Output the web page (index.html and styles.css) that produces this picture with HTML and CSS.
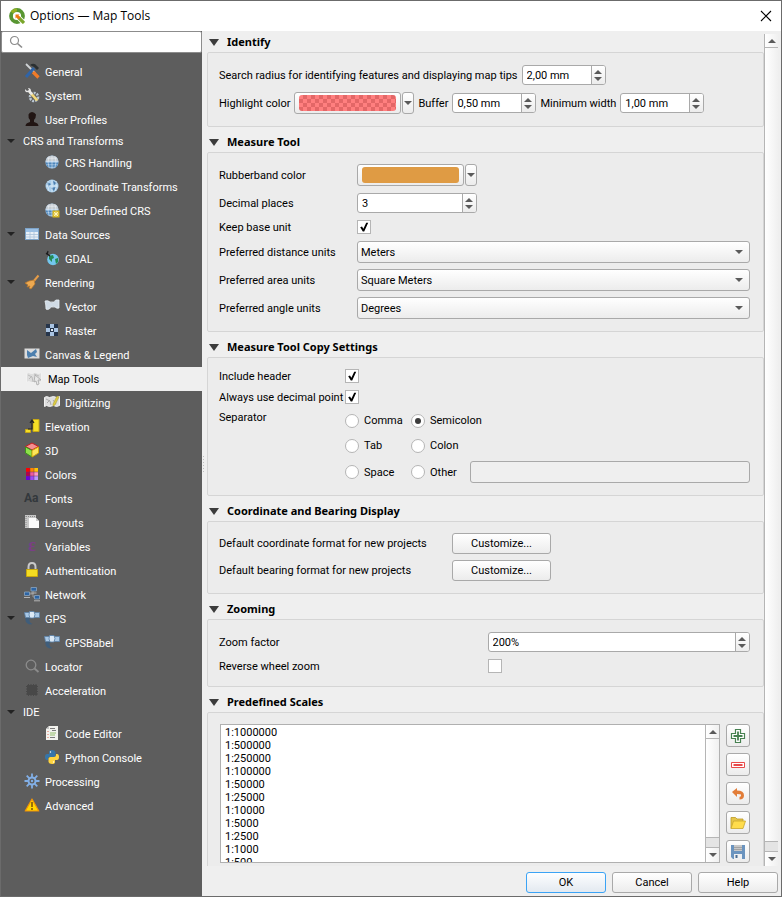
FILE: index.html
```
<!DOCTYPE html>
<html lang="en">
  <head>
    <meta charset="utf-8" />
    <meta content="width=device-width, initial-scale=1" name="viewport" />
    <title>Options — Map Tools</title>
    <link rel="stylesheet" href="styles.css">
  </head>
  <body>
    <svg class="defs" aria-hidden="true">
      <symbol id="globe" viewBox="0 0 16 16">
        <circle cx="8" cy="8" r="6.600" fill="#8fb8dd"/>
        <path d="M1.600 7a6.500 6.500 0 0 1 12.800 0z" fill="#c4ccd2"/>
        <path d="M2 9.500h12M3 12h10" stroke="#4f86bb" stroke-width="1.400"/>
        <path d="M8 1.500v13M1.500 7.500h13M3 4.200h10M5 2.500q-2 5.500 0 11M11 2.500q2 5.500 0 11" fill="none" stroke="#f4f7fa" stroke-width=".5"/>
      </symbol>
      <symbol id="satellite" viewBox="0 0 16 16">
        <path d="M.5 2.500h5v5h-4zM10.500 2.500h5v5h-5z" fill="#a9c8e6" stroke="#5d83a8" stroke-width=".8"/>
        <path d="M5.500 1.500h4.500l1 3-1 3.500H6L5 5z" fill="#dce9f5" stroke="#587fa6" stroke-width=".8"/>
        <path d="M1.500 8q-.5 4 2 5.500t5 .5q-2.500-1-3-3T6.500 8z" fill="#3f5d7a"/>
      </symbol>
      <symbol id="map" viewBox="0 0 16 16">
        <path d="M.5 3.500l2-1 3 1 4-1 3 1 3-1v9l-3 1-3-1-4 1-3-1-2 1z" fill="#dedede" stroke="#f2f2f2"/>
      </symbol>
    </svg>

    <div class="window">
      <header class="titlebar">
        <svg class="logo" viewBox="0 0 16 16">
          <circle cx="8" cy="8" r="6" fill="none" stroke="#589632" stroke-width="3.800"/>
          <path d="M3 4.500A6 6 0 0 1 8 2" fill="none" stroke="#93b023" stroke-width="3.200"/>
          <path d="M8.500 8.500L15 15" stroke="#fff" stroke-width="5"/>
          <path d="M9.500 9.500l5.500 5.500" stroke="#7aa62b" stroke-width="3.200"/>
          <path d="M6.500 6.500h4l-1 1 2 2-2 2-2-2-1 1z" fill="#ee7913"/>
        </svg>
        <h1>Options — Map Tools</h1>
        <button class="close" type="button" aria-label="Close">
          <svg viewBox="0 0 12 12"><path d="M1 1l10 10M11 1L1 11" stroke="#000" stroke-width="1.100"/></svg>
        </button>
      </header>

      <div class="main">
        <aside class="sidebar">
          <label class="search">
            <svg viewBox="0 0 14 14"><circle cx="5.500" cy="5.500" r="4" fill="none" stroke="#8c8c8c" stroke-width="1.200"/><path d="M8.500 8.500l4.500 4" stroke="#8c8c8c" stroke-width="1.600"/></svg>
            <input type="text" aria-label="Search">
          </label>
          <nav class="tree">
            <a href="#"><svg viewBox="0 0 16 16"><path d="M2 1l9 9" stroke="#cfd3d6" stroke-width="1.800"/><path d="M9 9l5.500 5.500" stroke="#f07b28" stroke-width="3.200"/><path d="M10 5L2 14" stroke="#2f64a8" stroke-width="3"/><path d="M6 2q4-3 7 1l2 2-2 2-3-3z" fill="#2b2f31"/></svg>General</a>
            <a href="#"><svg viewBox="0 0 16 16"><circle cx="10" cy="10" r="4" fill="none" stroke="#b9c6d2" stroke-width="2.600" stroke-dasharray="2 1"/><path d="M5 6l7 8 2.500-1-7-8z" fill="#f3d978"/><path d="M1 2l2 2 2-1-1-2q3 0 3 3l2 3-2 1-3-3Q1 6 1 2" fill="#e8e8e8"/></svg>System</a>
            <a href="#"><svg viewBox="0 0 16 16"><path d="M1.500 15q0-3 4.500-4V9Q4 7 4.500 3.500 5.500 1 8 1t4 2.500Q12 7 10 9v2q4.500 1 4.500 4z" fill="#211513"/></svg>User Profiles</a>
            <a href="#" class="group open">CRS and Transforms</a>
            <a href="#" class="child"><svg><use href="#globe"/></svg>CRS Handling</a>
            <a href="#" class="child"><svg viewBox="0 0 16 16"><circle cx="8" cy="8" r="6.500" fill="#a9cdea"/><path d="M3 4l4 2-3 3zM9 3l4 2-3 2zM7 10l5-1-2 4z" fill="#4b7fb1"/><path d="M2 8h12M8 2v12M4 3q-1 5 1 10M12 3q1 5-1 10" fill="none" stroke="#e4f0f8" stroke-width=".7"/></svg>Coordinate Transforms</a>
            <a href="#" class="child"><svg viewBox="0 0 16 16"><use href="#globe"/><rect x="8.500" y="8.500" width="7" height="7" fill="#d5b51e"/><path d="M12 9.500v5M9.500 12h5M10 10l4 4M14 10l-4 4" stroke="#fff7c0" stroke-width=".9"/></svg>User Defined CRS</a>
            <a href="#" class="open"><svg viewBox="0 0 16 16"><rect x="1.500" y="2.500" width="13" height="11" fill="#e8eff6" stroke="#7da3c8"/><path d="M2 4.500h12" stroke="#9cc0e4" stroke-width="3"/><path d="M2 8.500h12M2 11h12M6 6v7M10 6v7" stroke="#a9c2da" stroke-width=".8"/></svg>Data Sources</a>
            <a href="#" class="child"><svg viewBox="0 0 16 16"><circle cx="9" cy="9.500" r="5.800" fill="#73c7ee"/><path d="M5 6l4-1 1 3-2 1v3L5 9zM11 9l3-1v4l-2 2z" fill="#258a53"/><path d="M2 3l4 3M4 1L3 5" stroke="#1c1c1c" stroke-width="1.200"/></svg>GDAL</a>
            <a href="#" class="open"><svg viewBox="0 0 16 16"><path d="M9 8l5.500-6.500" stroke="#e59c48" stroke-width="2"/><path d="M1 9l4-2 5-1 1 4-4 5-2-1 1-2-3 1 1-2z" fill="#eda951" stroke="#b87528" stroke-width=".7"/></svg>Rendering</a>
            <a href="#" class="child"><svg viewBox="0 0 16 16"><path d="M1 3q3-1 5 1 4 1 6-2h3v8q-2 1-4-1-4-1-6 2-2 1-3 0Q2 7 1 3" fill="#d0dbe5" stroke="#e9f0f5" stroke-width=".8"/></svg>Vector</a>
            <a href="#" class="child"><svg viewBox="0 0 16 16"><path d="M2 2h12v12H2z" fill="#26354b"/><path d="M6 2h4v4H6zM2 6h4v4H2zM10 6h4v4h-4zM6 10h4v4H6z" fill="#a9c4e3"/><path d="M7 7h2v2H7z" fill="#e6eef7"/></svg>Raster</a>
            <a href="#"><svg viewBox="0 0 16 16"><path d="M.5 2.500h15v10H.5z" fill="#dcdcdc"/><path d="M3 4l4 3 5-4 1 3-2 2 2 3-4-1-5 2-1-3z" fill="#4c7fae"/></svg>Canvas &amp; Legend</a>
            <a href="#" class="selected"><svg viewBox="0 0 16 16"><use href="#map"/><path d="M2 5l4 2 1 5M8 4l5 2M3 9l3-3" fill="none" stroke="#bcbcbc"/><path d="M9 5l6 5-3 0 1 4-2 1-1-4-2 1z" fill="#e8e8e8" stroke="#a7a7a7" stroke-width=".8"/></svg>Map Tools</a>
            <a href="#" class="child"><svg viewBox="0 0 16 16"><use href="#map"/><path d="M2 5l4 2 1 4M3 9l3-3M9 6l3 4" fill="none" stroke="#aaa"/><path d="M9 10l4-8 2 1-4 8-2 1z" fill="#ddcc42" stroke="#a39635" stroke-width=".5"/></svg>Digitizing</a>
            <a href="#"><svg viewBox="0 0 16 16"><path d="M9 1.500h6v12H9zM1.500 11.500h5v3h-5z" fill="#f5df26" stroke="#c6a816"/><path d="M4 11h4V3M6 5l2-3 2 3" fill="none" stroke="#222" stroke-width="1.200"/></svg>Elevation</a>
            <a href="#"><svg viewBox="0 0 16 16"><path d="M8 1l6.500 3.500L8 8 1.500 4.500z" fill="#f49090" stroke="#c61d1d"/><path d="M1.500 5L8 8.500V15l-6.500-4z" fill="#8ee04b" stroke="#3d931b"/><path d="M14.500 5L8 8.500V15l6.500-4z" fill="#fde65b" stroke="#d2a80c"/></svg>3D</a>
            <a href="#"><svg viewBox="0 0 16 16"><path d="M2 2h12v12H2z" fill="#7a3a80"/><path d="M2 2h4v4H2z" fill="#f00"/><path d="M6 2h4v4H6z" fill="#ff8400"/><path d="M10 2h4v4h-4z" fill="#ffc400"/><path d="M2 6h4v4H2z" fill="#b5004a"/><path d="M6 6h4v4H6z" fill="#ee5b9d"/><path d="M10 6h4v4h-4z" fill="#ff9ac6"/><path d="M2 10h4v4H2z" fill="#6b00dc"/><path d="M6 10h4v4H6z" fill="#9b4bf5"/><path d="M10 10h4v4h-4z" fill="#b79aff"/><path d="M2 6h12M2 10h12M6 2v12M10 2v12" stroke="#6a3565" stroke-width=".5"/></svg>Colors</a>
            <a href="#"><span class="glyph">Aa</span>Fonts</a>
            <a href="#"><svg viewBox="0 0 16 16"><path d="M1 1h11v3H5v10H1z" fill="#c7c7c7"/><path d="M2 2v11M2 2.500h9" stroke="#888" stroke-dasharray="1 1"/><path d="M5 4h7l3 3v7H5z" fill="#fbfbfb"/><path d="M12 4v3h3" fill="#ccc"/></svg>Layouts</a>
            <a href="#"><span class="glyph epsilon">ε</span>Variables</a>
            <a href="#"><svg viewBox="0 0 16 16"><path d="M4.500 8V5q0-4 3.500-4t3.500 4v3" fill="none" stroke="#c9c9c9" stroke-width="2"/><path d="M2.500 7.500h11v7h-11z" fill="#f4dc22" stroke="#c9a80d"/></svg>Authentication</a>
            <a href="#"><svg viewBox="0 0 16 16"><path d="M5 8h4V4M9 7v4h2" fill="none" stroke="#999"/><path d="M.5 6h5v3.500h-5zM7 1.500h5.500V5H7zM10.500 9.500h5V13h-5z" fill="#2c64a4" stroke="#8ba6c0" stroke-width=".8"/><path d="M0 11.500h6M6.500 7h6M10 14.800h6" stroke="#b4b4b4"/></svg>Network</a>
            <a href="#" class="open"><svg><use href="#satellite"/></svg>GPS</a>
            <a href="#" class="child"><svg><use href="#satellite"/></svg>GPSBabel</a>
            <a href="#"><svg viewBox="0 0 16 16"><circle cx="7" cy="7" r="4.800" fill="none" stroke="#8c8c8c" stroke-width="1.300"/><path d="M10.500 10.500l4 3.500" stroke="#8c8c8c" stroke-width="1.800"/></svg>Locator</a>
            <a href="#"><svg viewBox="0 0 16 16"><path d="M3 3h10v10H3z" fill="#484848"/><path d="M4.500 2v12M7 2v12M9.500 2v12M12 2v12M2 4.500h12M2 7h12M2 9.500h12M2 12h12" stroke="#484848"/></svg>Acceleration</a>
            <a href="#" class="group open">IDE</a>
            <a href="#" class="child"><svg viewBox="0 0 16 16"><path d="M5 1h9v14H2V4z" fill="#f2f2ee"/><path d="M2 4h3V1z" fill="#c3c3c3"/><path d="M6 3.500h5M8 5.500h4M6 12.500h5" stroke="#7b7b7b"/><path d="M6 8h6M6 10h5" stroke="#92bd6b"/><path d="M4 6v1M4 9v1M4 12v1" stroke="#e06a54"/></svg>Code Editor</a>
            <a href="#" class="child"><svg viewBox="0 0 16 16"><path d="M5 5V3q0-2 3-2t3.500 2v3.500q0 1.500-2 1.500H6q-2 0-2 2v1H3Q1 11 1 8t2-3z" fill="#3675a8"/><path d="M11 11v2q0 2-3 2t-3.500-2V9.500Q4.500 8 6.500 8H10q2 0 2-2V5h1q2 0 2 3t-2 3z" fill="#ffd43f"/><circle cx="6.500" cy="3" r=".7" fill="#fff"/><circle cx="9.500" cy="13" r=".7" fill="#fff"/></svg>Python Console</a>
            <a href="#"><svg viewBox="0 0 16 16"><path d="M8 .5v15M.5 8h15M2.700 2.700l10.600 10.600M13.300 2.700L2.700 13.300" stroke="#82afe6" stroke-width="1.800"/><circle cx="8" cy="8" r="3.500" fill="#5d5d5d" stroke="#82afe6" stroke-width="2"/><circle cx="8" cy="8" r="1.200" fill="#82afe6"/></svg>Processing</a>
            <a href="#"><svg viewBox="0 0 16 16"><path d="M8 2l6.800 12H1.200z" fill="#ffd600" stroke="#ef9108" stroke-width="1.200" stroke-linejoin="round"/><path d="M8 5v5M8 11v2" stroke="#80560a" stroke-width="1.600"/></svg>Advanced</a>
          </nav>
        </aside>
        <div class="splitter"></div>

        <div class="content">
          <div class="scrollarea">
            <form class="sections">
              <section>
                <h2>Identify</h2>
                <div class="box stack">
                  <div class="line">
                    <label for="radius">Search radius for identifying features and displaying map tips</label>
                    <div class="spin"><input id="radius" type="text" value="2,00 mm"><span class="steps"><button type="button" aria-label="Up"></button><button type="button" aria-label="Down"></button></span></div>
                  </div>
                  <div class="line">
                    <label for="highlight">Highlight color</label>
                    <div class="color"><button id="highlight" type="button"><span class="swatch checker"></span></button><button class="drop" type="button" aria-label="Color menu"></button></div>
                    <label for="buffer">Buffer</label>
                    <div class="spin"><input id="buffer" type="text" value="0,50 mm"><span class="steps"><button type="button" aria-label="Up"></button><button type="button" aria-label="Down"></button></span></div>
                    <label for="minwidth">Minimum width</label>
                    <div class="spin"><input id="minwidth" type="text" value="1,00 mm"><span class="steps"><button type="button" aria-label="Up"></button><button type="button" aria-label="Down"></button></span></div>
                  </div>
                </div>
              </section>

              <section>
                <h2>Measure Tool</h2>
                <div class="box fields measure">
                  <label for="rubberband">Rubberband color</label>
                  <div class="color"><button id="rubberband" type="button"><span class="swatch"></span></button><button class="drop" type="button" aria-label="Color menu"></button></div>
                  <label for="decimals">Decimal places</label>
                  <div class="spin wide"><input id="decimals" type="text" value="3"><span class="steps"><button type="button" aria-label="Up"></button><button type="button" aria-label="Down"></button></span></div>
                  <label for="baseunit">Keep base unit</label>
                  <input id="baseunit" type="checkbox" checked>
                  <label for="distance">Preferred distance units</label>
                  <div class="select"><select id="distance"><option>Meters</option></select></div>
                  <label for="area">Preferred area units</label>
                  <div class="select"><select id="area"><option>Square Meters</option></select></div>
                  <label for="angle">Preferred angle units</label>
                  <div class="select"><select id="angle"><option>Degrees</option></select></div>
                </div>
              </section>

              <section>
                <h2>Measure Tool Copy Settings</h2>
                <div class="box fields copy">
                  <label for="header">Include header</label>
                  <input id="header" type="checkbox" checked>
                  <label for="point">Always use decimal point</label>
                  <input id="point" type="checkbox" checked>
                  <span class="caption">Separator</span>
                  <div class="radios">
                    <label><input type="radio" name="separator">Comma</label>
                    <label><input type="radio" name="separator" checked>Semicolon</label>
                    <label><input type="radio" name="separator">Tab</label>
                    <label><input type="radio" name="separator">Colon</label>
                    <label><input type="radio" name="separator">Space</label>
                    <div class="other">
                      <label><input type="radio" name="separator">Other</label>
                      <input type="text" aria-label="Other separator" disabled>
                    </div>
                  </div>
                </div>
              </section>

              <section>
                <h2>Coordinate and Bearing Display</h2>
                <div class="box fields display">
                  <label for="coordformat">Default coordinate format for new projects</label>
                  <button id="coordformat" class="button" type="button">Customize...</button>
                  <label for="bearformat">Default bearing format for new projects</label>
                  <button id="bearformat" class="button" type="button">Customize...</button>
                </div>
              </section>

              <section>
                <h2>Zooming</h2>
                <div class="box fields zooming">
                  <label for="factor">Zoom factor</label>
                  <div class="spin full"><input id="factor" type="text" value="200%"><span class="steps"><button type="button" aria-label="Up"></button><button type="button" aria-label="Down"></button></span></div>
                  <label for="reverse">Reverse wheel zoom</label>
                  <input id="reverse" type="checkbox">
                </div>
              </section>

              <section>
                <h2>Predefined Scales</h2>
                <div class="box scales">
                  <div class="listbox">
                    <ul>
                      <li>1:1000000</li>
                      <li>1:500000</li>
                      <li>1:250000</li>
                      <li>1:100000</li>
                      <li>1:50000</li>
                      <li>1:25000</li>
                      <li>1:10000</li>
                      <li>1:5000</li>
                      <li>1:2500</li>
                      <li>1:1000</li>
                      <li>1:500</li>
                    </ul>
                    <div class="scrollbar"><span class="up"></span><span class="rest"></span><span class="down"></span></div>
                  </div>
                  <div class="tools">
                    <button type="button" aria-label="Add"><svg viewBox="0 0 16 16"><path d="M5.500 1.500h5v4h4v5h-4v4h-5v-4h-4v-5h4z" fill="#fff" stroke="#478151" stroke-width="1.200"/><path d="M8 3.500v9M3.500 8h9" stroke="#478151" stroke-width="1.800"/></svg></button>
                    <button type="button" aria-label="Remove"><svg viewBox="0 0 16 16"><path d="M1.500 5.500h13v5h-13z" fill="#fff" stroke="#e84b4b"/><path d="M3.500 8h9" stroke="#e84b4b" stroke-width="2"/></svg></button>
                    <button type="button" aria-label="Reset"><svg viewBox="0 0 16 16"><path d="M2 6l5-4v2.500q7 0 7 5 0 4-4.500 4V11q2-.5 1.500-2.500Q10 8 7 8v3z" fill="#e27d38"/></svg></button>
                    <button type="button" aria-label="Open"><svg viewBox="0 0 16 16"><path d="M1 13.500V2.500h4.500L7 4h6v2" fill="#e6c64a" stroke="#bd9b23" stroke-width=".8"/><path d="M3.500 6h12L13 13.500H1z" fill="#ffdc4c" stroke="#c9a62c" stroke-width=".8"/></svg></button>
                    <button type="button" aria-label="Save"><svg viewBox="0 0 16 16"><path d="M1 1h14v14H3l-2-2z" fill="#6b94bf"/><path d="M4 1h8v6H4z" fill="#c8c8c8"/><path d="M4 3.500h8M4 5.500h8" stroke="#999" stroke-width=".8"/><path d="M4 10h8v5H4z" fill="#eef0f2"/><path d="M5.500 11h2v3h-2z" fill="#4b6c92"/></svg></button>
                  </div>
                </div>
              </section>
            </form>
            <div class="scrollbar outer"><span class="up"></span><span class="rest"></span><span class="down"></span></div>
          </div>
          <footer>
            <button class="button default" type="button">OK</button>
            <button class="button" type="button">Cancel</button>
            <button class="button" type="button">Help</button>
          </footer>
        </div>
      </div>
    </div>
  </body>
</html>
```
FILE: styles.css
```
* {
  box-sizing: border-box;
}
body {
  margin: 0;
  background-color: #efefef;
  color: #000;
  font-family: Roboto, "Liberation Sans", sans-serif;
  font-size: 11px;
  line-height: 13px;
}
input, button, select {
  margin: 0;
  padding: 0;
  color: inherit;
  font: inherit;
}
ul {
  list-style: none;
  margin: 0;
  padding: 0;
}
.defs {
  display: none;
}
.window {
  border: 1px solid #6b6b6b;
  display: flex;
  flex-direction: column;
  height: 100vh;
}

/* title bar */
.titlebar {
  align-items: center;
  background-color: #fff;
  display: flex;
  flex: none;
  height: 30px;
  padding: 0 9px 0 8px;
}
.titlebar h1 {
  flex: 1;
  font-family: "Open Sans", sans-serif;
  font-size: 12px;
  font-weight: normal;
  line-height: 16px;
  margin: 0 5px;
}
.logo {
  height: 16px;
  width: 16px;
}
.close {
  background: none;
  border: none;
  height: 12px;
  width: 12px;
}
.close svg {
  display: block;
}

.main {
  display: flex;
  flex: 1;
  min-height: 0;
}

/* sidebar */
.sidebar {
  background-color: #5d5d5d;
  flex: none;
  overflow: hidden;
  width: 201px;
}
.search {
  align-items: center;
  background-color: #fff;
  border: 1px solid #8c8c8c;
  border-radius: 2px;
  display: flex;
  gap: 5px;
  height: 22px;
  padding: 0 7px;
}
.search svg {
  flex: none;
  height: 14px;
  width: 14px;
}
.search input {
  background: none;
  border: none;
  flex: 1;
  min-width: 0;
  outline: none;
}
.tree {
  padding-top: 7px;
}
.tree a {
  align-items: center;
  color: #fff;
  display: flex;
  gap: 5px;
  height: 24px;
  padding-left: 23px;
  position: relative;
  text-decoration: none;
}
.tree svg, .glyph {
  flex: none;
  height: 16px;
  margin-bottom: 2px;
  width: 16px;
}
.tree .child {
  padding-left: 43px;
}
.tree .group {
  height: 19px;
  padding-left: 22px;
}
.tree .selected {
  background-color: #efefef;
  color: #000;
  gap: 6px;
  padding-left: 25px;
}
.tree .open::before {
  border: 4px solid transparent;
  border-bottom: none;
  border-top-color: #222;
  content: "";
  left: 6px;
  position: absolute;
  top: 9px;
}
.tree .group::before {
  top: 7px;
}
.glyph {
  color: #33383c;
  font-size: 12px;
  font-weight: bold;
  line-height: 16px;
}
.epsilon {
  color: #7a3f86;
  font-family: "Liberation Serif", serif;
  font-size: 18px;
  line-height: 14px;
  text-align: center;
}
.splitter {
  align-self: center;
  background-image: radial-gradient(circle, #bdbdbd 1px, transparent 1px);
  background-size: 3px 3px;
  flex: none;
  height: 18px;
  margin-right: 2px;
  width: 3px;
}

/* scrolled settings */
.content {
  display: flex;
  flex: 1;
  flex-direction: column;
  min-width: 0;
}
.scrollarea {
  display: flex;
  flex: 1;
  min-height: 0;
  overflow: hidden;
  padding-right: 3px;
}
.sections {
  display: flex;
  flex: 1;
  flex-direction: column;
  gap: 4px;
  min-width: 0;
}
h2 {
  align-items: center;
  display: flex;
  font-family: "Noto Sans", sans-serif;
  font-size: 11px;
  font-weight: bold;
  gap: 8px;
  height: 21px;
  line-height: 15px;
  margin: 0;
  padding-left: 2px;
}
h2::before {
  border: 5px solid transparent;
  border-bottom: none;
  border-top: 7px solid #3c3c3c;
  content: "";
  margin-top: 2px;
}
.box {
  background-color: #ececec;
  border: 1px solid #d5d5d5;
  border-radius: 2px;
  padding: 11px 13px 12px 11px;
}
.stack {
  display: grid;
  gap: 6px;
}
.line {
  align-items: center;
  display: flex;
  gap: 4px;
  height: 22px;
}
.fields {
  align-items: center;
  display: grid;
  row-gap: 6px;
}
.measure {
  grid-template-columns: 138px 1fr;
}
.copy {
  grid-template-columns: 126px 1fr;
}
.display {
  grid-template-columns: 233px 1fr;
}
.zooming {
  column-gap: 6px;
  grid-template-columns: 1fr 1fr;
}

/* controls */
.spin {
  background-color: #fff;
  border: 1px solid #a9a9a9;
  border-radius: 3px;
  display: flex;
  height: 20px;
  margin: 1px 0;
  overflow: hidden;
  width: 84px;
}
.spin.wide {
  width: 120px;
}
.spin.full {
  width: auto;
}
.spin input {
  background: none;
  border: none;
  flex: 1;
  min-width: 0;
  outline: none;
  padding-left: 4px;
}
.steps {
  background: linear-gradient(#fff, #ececec);
  border-left: 1px solid #a9a9a9;
  display: flex;
  flex-direction: column;
  gap: 3px;
  justify-content: center;
  width: 14px;
}
.steps button {
  background: none;
  border: 4px solid transparent;
  border-top: none;
  border-bottom-color: #5a5a5a;
  height: 4px;
  margin-left: 2px;
  width: 8px;
}
.steps button + button, .drop::before, .select::after {
  border: 4px solid transparent;
  border-bottom: none;
  border-top-color: #5a5a5a;
}
.color {
  display: flex;
  gap: 1px;
}
.color button, .button, .tools button {
  background: linear-gradient(#fff, #ececec);
  border: 1px solid #a9a9a9;
  border-radius: 3px;
}
.color button {
  height: 22px;
  padding: 0 4px;
  width: 107px;
}
.color .drop {
  align-items: center;
  display: flex;
  justify-content: center;
  padding: 0;
  width: 12px;
}
.drop::before {
  content: "";
}
.swatch {
  background-color: #df9b44;
  border-radius: 3px;
  display: block;
  height: 16px;
}
.checker {
  background: repeating-conic-gradient(#e36767 0 25%, #ff7f7f 0 50%) 0 0 / 8px 8px;
}
.select {
  position: relative;
}
.select::after {
  content: "";
  pointer-events: none;
  position: absolute;
  right: 7px;
  top: 9px;
}
select {
  appearance: none;
  background: linear-gradient(#fff, #ececec);
  border: 1px solid #a9a9a9;
  border-radius: 3px;
  display: block;
  height: 22px;
  padding: 0 20px 0 3px;
  width: 100%;
}
input[type="checkbox"], input[type="radio"] {
  appearance: none;
  background-color: #fff;
  border: 1px solid #b5b5b5;
  height: 14px;
  width: 14px;
}
input[type="checkbox"] {
  margin-bottom: 1px;
}
input[type="checkbox"]:checked::before {
  background-color: #000;
  clip-path: polygon(12% 52%, 30% 46%, 44% 68%, 72% 8%, 92% 8%, 52% 96%, 38% 96%);
  content: "";
  display: block;
  height: 10px;
  margin: 1px;
  width: 10px;
}
input[type="radio"] {
  border-radius: 50%;
  flex: none;
}
input[type="radio"]:checked::before {
  background-color: #3c3c3c;
  border-radius: 50%;
  content: "";
  display: block;
  height: 6px;
  margin: 3px;
  width: 6px;
}
.caption {
  align-self: start;
}
.radios {
  align-items: center;
  display: grid;
  gap: 6px 0;
  grid-template-columns: 66px 1fr;
  grid-template-rows: 19px 19px 22px;
}
.radios label {
  align-items: center;
  display: flex;
  gap: 5px;
}
.other {
  display: flex;
}
.other label {
  width: 59px;
}
.other input[type="text"] {
  background-color: #efefef;
  border: 1px solid #a9a9a9;
  border-radius: 3px;
  flex: 1;
  height: 22px;
  min-width: 0;
}
.button {
  height: 21px;
  width: 99px;
}

/* predefined scales */
.scales {
  display: flex;
  gap: 6px;
  padding-left: 12px;
}
.listbox {
  background-color: #fff;
  border: 1px solid #b0b0b0;
  display: flex;
  flex: 1;
  height: 139px;
}
.listbox ul {
  flex: 1;
  overflow: hidden;
  padding: 1px 4px;
}
.tools {
  display: flex;
  flex-direction: column;
  gap: 6px;
}
.tools button {
  height: 23px;
  padding: 3px;
  width: 24px;
}
.tools svg {
  display: block;
  height: 16px;
  width: 16px;
}
.scrollbar {
  background: linear-gradient(90deg, #fff, #f0f0f0);
  border-left: 1px solid #b5b5b5;
  display: flex;
  flex: none;
  flex-direction: column;
  width: 14px;
}
.scrollbar .up, .scrollbar .down {
  align-items: center;
  display: flex;
  height: 14px;
  justify-content: center;
}
.scrollbar .up {
  border-bottom: 1px solid #b5b5b5;
}
.up::before, .down::before {
  border: 4px solid transparent;
  content: "";
}
.up::before {
  border-bottom-color: #5a5a5a;
  border-top: none;
}
.down::before {
  border-bottom: none;
  border-top-color: #5a5a5a;
}
.scrollbar .rest {
  background-color: #e4e4e4;
  border: 1px solid #b5b5b5;
  border-width: 1px 0;
  height: 11px;
  margin-top: auto;
}
.scrollbar.outer {
  margin-top: 3px;
}

footer {
  display: flex;
  flex: none;
  gap: 6px;
  height: 30px;
  justify-content: flex-end;
  padding: 6px 3px 3px;
}
footer .button {
  width: 80px;
}
footer .default {
  background: linear-gradient(#fdfeff, #e3e9f0);
  border-color: #3ba3f5;
}
```
